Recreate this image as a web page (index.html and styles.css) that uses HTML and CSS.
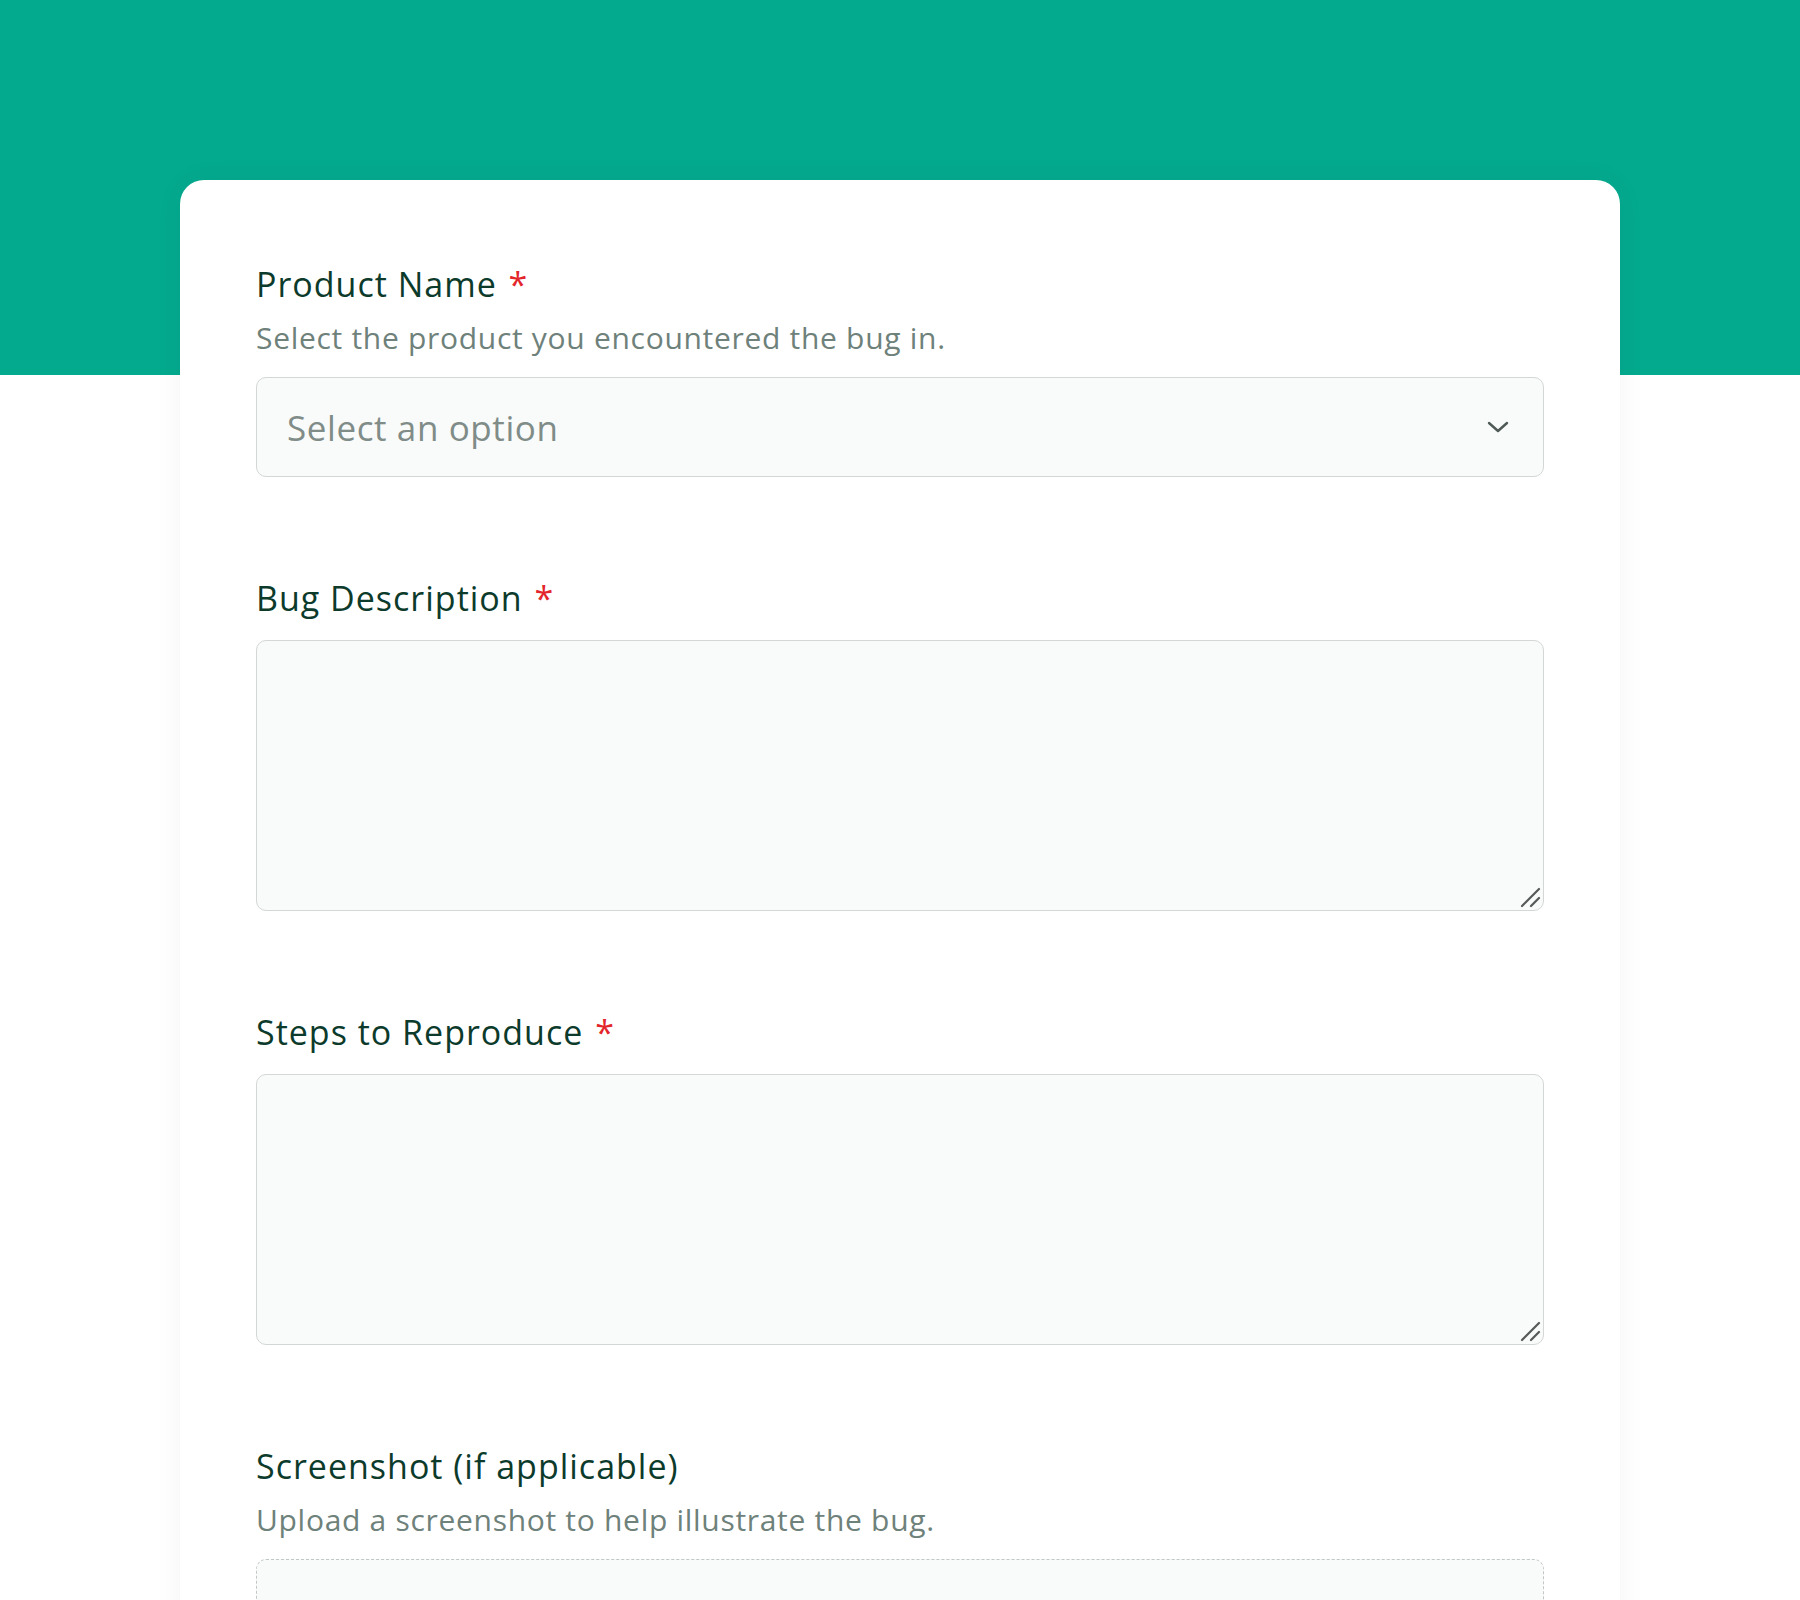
FILE: index.html
```html
<!DOCTYPE html>
<html lang="en">
<head>
<meta charset="utf-8">
<title>Bug Report</title>
<link rel="stylesheet" href="styles.css">
</head>
<body>
<div class="hero"></div>
<main class="card">
  <div class="field">
    <label class="label">Product Name <span class="req">*</span></label>
    <p class="desc">Select the product you encountered the bug in.</p>
    <div class="select">
      <span class="placeholder">Select an option</span>
      <svg class="chev" width="22" height="12" viewBox="0 0 22 12"><path d="M2 2 L11 10 L20 2" fill="none" stroke="#4f5a56" stroke-width="2.4" stroke-linecap="round" stroke-linejoin="round"/></svg>
    </div>
  </div>
  <div class="field">
    <label class="label">Bug Description <span class="req">*</span></label>
    <div class="area-wrap">
      <textarea class="area"></textarea>
      <svg class="grip" width="22" height="22" viewBox="0 0 22 22"><path d="M3 20 L20 3 M12 20 L20 12" fill="none" stroke="#555a58" stroke-width="2.2" stroke-linecap="round"/></svg>
    </div>
  </div>
  <div class="field">
    <label class="label">Steps to Reproduce <span class="req">*</span></label>
    <div class="area-wrap">
      <textarea class="area"></textarea>
      <svg class="grip" width="22" height="22" viewBox="0 0 22 22"><path d="M3 20 L20 3 M12 20 L20 12" fill="none" stroke="#555a58" stroke-width="2.2" stroke-linecap="round"/></svg>
    </div>
  </div>
  <div class="field">
    <label class="label">Screenshot (if applicable)</label>
    <p class="desc">Upload a screenshot to help illustrate the bug.</p>
    <div class="upload"></div>
  </div>
</main>
</body>
</html>
```
FILE: styles.css
```css
html, body {
  margin: 0;
  padding: 0;
  background: #ffffff;
  font-family: "Open Sans", "Lato", sans-serif;
}
.hero {
  height: 375px;
  background: #04aa8e;
}
.card {
  width: 1440px;
  box-sizing: border-box;
  margin: -195px auto 0;
  background: #ffffff;
  border-radius: 24px;
  box-shadow: 0 0 28px rgba(0, 0, 0, 0.05);
  padding: 84px 76px 120px;
  display: flex;
  flex-direction: column;
  gap: 101px;
}
.field {
  display: flex;
  flex-direction: column;
}
.label {
  font-size: 34px;
  line-height: 40px;
  font-weight: 500;
  color: #0c3a2b;
  margin-bottom: 22px;
  letter-spacing: 1px;
}
.req {
  color: #e3262b;
  margin-left: 2px;
}
.desc {
  margin: -6px 0 21px;
  font-size: 30px;
  line-height: 36px;
  color: #6e817a;
  letter-spacing: 0.7px;
}
.select {
  height: 100px;
  box-sizing: border-box;
  border: 1.5px solid #d3d7d6;
  border-radius: 10px;
  background: #f9fafa;
  display: flex;
  align-items: center;
  justify-content: space-between;
  padding: 0 30px 0 30px;
}
.placeholder {
  font-size: 35px;
  color: #7f8c88;
  letter-spacing: 0.6px;
}
.chev {
  margin-right: 4px;
}
.area-wrap {
  position: relative;
}
.area {
  display: block;
  height: 271px;
  box-sizing: border-box;
  border: 1.5px solid #d3d7d6;
  border-radius: 10px;
  background: #f9fafa;
  resize: none;
  font-family: inherit;
  width: 100%;
  margin: 0;
}
.grip {
  position: absolute;
  right: 3px;
  bottom: 3px;
}
.upload {
  height: 240px;
  border: 1.5px dashed #c3c8c6;
  border-radius: 10px;
  background: #f9fafa;
}
```
